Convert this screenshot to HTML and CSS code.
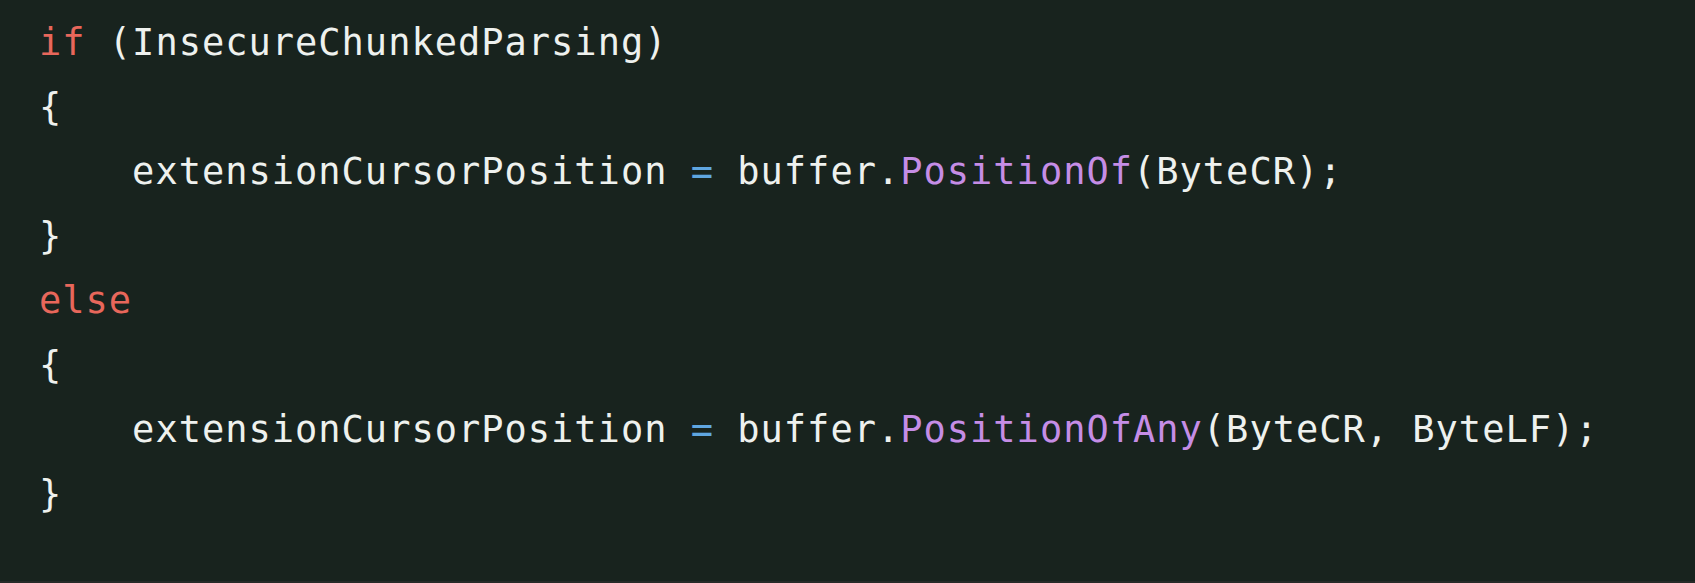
FILE: index.html
```html
<!DOCTYPE html>
<html>
<head>
<meta charset="utf-8">
<link rel="stylesheet" href="styles.css">
</head>
<body>
<div class="frame">
<pre class="code"><span class="ln">SequencePosition? extensionCursorPosition;</span>
<span class="ln"><span class="kw">if</span> (InsecureChunkedParsing)</span>
<span class="ln">{</span>
<span class="ln">    extensionCursorPosition <span class="op">=</span> buffer.<span class="fn">PositionOf</span>(ByteCR);</span>
<span class="ln">}</span>
<span class="ln"><span class="kw">else</span></span>
<span class="ln">{</span>
<span class="ln">    extensionCursorPosition <span class="op">=</span> buffer.<span class="fn">PositionOfAny</span>(ByteCR, ByteLF);</span>
<span class="ln">}</span></pre>
</div>
</body>
</html>
```

FILE: styles.css
```css
html, body {
  margin: 0;
  padding: 0;
  background: #18231e;
}
.frame {
  width: 1695px;
  height: 583px;
  overflow: hidden;
  background: #18231e;
  border-bottom: 2px solid #262a28;
  box-sizing: border-box;
}
.code {
  margin: -53.7px 0 0 0;
  padding: 0 0 0 39px;
  font-family: "DejaVu Sans Mono", monospace;
  font-size: 37px;
  letter-spacing: 1px;
  line-height: 64.6px;
  color: #eef1ee;
  white-space: pre;
}
.kw { color: #e8675b; }
.fn { color: #c58de6; }
.op { color: #5fa6e0; }
```
